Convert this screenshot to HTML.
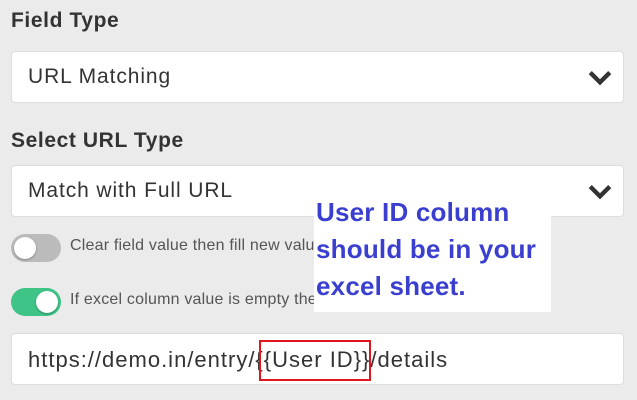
<!DOCTYPE html>
<html><head><style>
body{margin:0;width:637px;height:400px;background:#ebebeb;font-family:"Liberation Sans",sans-serif;position:relative;overflow:hidden;color:#222}
.abs{position:absolute}
.lbl{font-weight:bold;font-size:21px;letter-spacing:0.6px;color:#333;left:11px}
.box{left:11px;width:613px;height:52px;background:#fff;border:1px solid #ddd;border-radius:4px;box-sizing:border-box}
.box span{position:absolute;left:16px;top:13px;font-size:21px;letter-spacing:0.9px;color:#333;white-space:nowrap}
.chev{position:absolute;right:10px;top:13px}
.tg{left:11px;width:50px;height:28px;border-radius:14px}
.knob{position:absolute;top:3px;width:22px;height:22px;border-radius:50%;background:#fff;box-shadow:0 1px 2px rgba(0,0,0,.3)}
.tt{left:70px;font-size:16px;letter-spacing:0.2px;color:#555;white-space:nowrap}
</style></head><body>
<div class="abs lbl" style="top:9px">Field Type</div>
<div class="abs box" style="top:51px"><span>URL Matching</span>
<svg class="chev" width="26" height="26" viewBox="0 0 24 24"><path d="M3 7l9 9 9-9" fill="none" stroke="#333" stroke-width="4"/></svg></div>
<div class="abs lbl" style="top:129px">Select URL Type</div>
<div class="abs box" style="top:165px"><span>Match with Full URL</span>
<svg class="chev" width="26" height="26" viewBox="0 0 24 24"><path d="M3 7l9 9 9-9" fill="none" stroke="#333" stroke-width="4"/></svg></div>
<div class="abs tg" style="top:234px;background:#bbb"><div class="knob" style="left:3px"></div></div>
<div class="abs tt" style="top:237px">Clear field value then fill new value</div>
<div class="abs tg" style="top:288px;background:#3ec487"><div class="knob" style="left:25px"></div></div>
<div class="abs tt" style="top:291px">If excel column value is empty then skip</div>
<div class="abs" style="left:314px;top:198px;width:237px;height:114px;background:#fff;overflow:hidden"><div style="position:absolute;left:2px;top:-4px;color:#3a3fd0;font-weight:bold;font-size:26px;letter-spacing:0.2px;line-height:37px;white-space:nowrap">User ID column<br>should be in your<br>excel sheet.</div></div>
<div class="abs box" style="top:333px"><span style="top:13px;font-size:22px;letter-spacing:1px">https://demo.in/entry/{{User ID}}/details</span></div>
<div class="abs" style="left:259px;top:340px;width:112px;height:41px;border:2px solid #e0161e;box-sizing:border-box"></div>
</body></html>
